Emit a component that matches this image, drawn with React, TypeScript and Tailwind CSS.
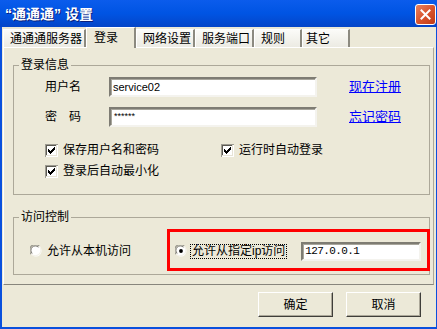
const tabs = [
  { label: "通通通服务器", cls: "w-[83px] pl-[6px]", active: false },
  { label: "登录", cls: "w-[50px] pl-[7px]", active: true },
  { label: "网络设置", cls: "w-[59px] pl-[6px]", active: false },
  { label: "服务端口", cls: "w-[59px] pl-[6px]", active: false },
  { label: "规则", cls: "w-[48px] pl-[6px]", active: false },
  { label: "其它", cls: "w-[48px] pl-[3px]", active: false },
];

function CheckBox() {
  // classic sunken 13x13 box with pixel check mark
  return (
    <svg width="13" height="13" viewBox="0 0 13 13" className="shrink-0" shapeRendering="crispEdges">
      <rect x="0" y="0" width="13" height="13" fill="#ffffff" />
      <rect x="0" y="0" width="13" height="1" fill="#9d9b91" />
      <rect x="0" y="0" width="1" height="13" fill="#9d9b91" />
      <rect x="1" y="1" width="11" height="1" fill="#5c5a52" />
      <rect x="1" y="1" width="1" height="11" fill="#5c5a52" />
      <rect x="1" y="11" width="11" height="1" fill="#e6e3d6" />
      <rect x="11" y="1" width="1" height="11" fill="#e6e3d6" />
      {[
        [3, 5], [4, 6], [5, 7], [6, 6], [7, 5], [8, 4], [9, 3],
      ].map(([x, y]) => (
        <rect key={x} x={x} y={y} width="1" height="3" fill="#000000" />
      ))}
    </svg>
  );
}

function Radio({ checked }: { checked?: boolean }) {
  return (
    <svg width="12" height="12" viewBox="0 0 12 12" className="shrink-0">
      <circle cx="6" cy="6" r="5.5" fill="#ffffff" />
      <path d="M1.2 9.2 A5.3 5.3 0 0 1 9.2 1.2" fill="none" stroke="#9a988e" strokeWidth="1.2" />
      <path d="M2.2 8.4 A4.3 4.3 0 0 1 8.4 2.2" fill="none" stroke="#6a6860" strokeWidth="0.9" />
      <path d="M9.2 1.2 A5.3 5.3 0 0 1 1.2 9.2" fill="none" stroke="#f4f2ea" strokeWidth="1.2" />
      {checked && <circle cx="6" cy="6" r="1.9" fill="#000000" />}
    </svg>
  );
}

function Field({ w, h, children }: { w: string; h: string; children?: React.ReactNode }) {
  return (
    <div
      className={`${w} ${h} flex items-center bg-white border-2 border-[#f4f3ee] border-t-[#7e7c73] border-l-[#7e7c73] shadow-[inset_1px_1px_0_#a8a69c] pl-[2px] overflow-hidden`}
    >
      {children}
    </div>
  );
}

function Link({ children }: { children: React.ReactNode }) {
  return (
    <a href="#" className="ml-[32px] text-[13px] leading-[16px] text-[#0000ff] underline">
      {children}
    </a>
  );
}

function Button({ children }: { children: React.ReactNode }) {
  return (
    <button className="w-[75px] h-[25px] flex items-center justify-center bg-[#ece9d8] border border-white border-b-[#3f3e3a] border-r-[#3f3e3a] shadow-[inset_-1px_-1px_0_#aca899] text-[12px] leading-[16px] text-black">
      {children}
    </button>
  );
}

export default function App() {
  return (
    <div className="w-[437px] h-[329px] flex flex-col bg-[#0a50dd] font-['Liberation_Sans','Noto_Sans_CJK_SC',sans-serif] text-black select-none">
      {/* title bar */}
      <div className="h-[27px] shrink-0 flex justify-between pl-[5px] pr-[1px] bg-linear-to-b from-[#0b5cec] via-[#0054e3] to-[#0445c8]">
        <div className="self-center text-[14px] leading-[18px] font-bold text-white [text-shadow:1px_1px_0_#0a1e7a]">
          “通通通” 设置
        </div>
        <div className="mt-[4px] w-[21px] h-[21px] rounded-[3px] border border-white bg-linear-to-br from-[#e8825f] via-[#d9542d] to-[#c03a15] flex items-center justify-center">
          <svg width="11" height="11" viewBox="0 0 11 11">
            <path d="M1.5 1.5 L9.5 9.5 M9.5 1.5 L1.5 9.5" stroke="#ffffff" strokeWidth="2" strokeLinecap="square" />
          </svg>
        </div>
      </div>

      {/* dialog body */}
      <div className="flex-1 ml-[2px] mr-[1px] mb-[2px] bg-[#ece9d8] flex flex-col">
        {/* tab strip */}
        <div className="h-[20px] shrink-0 flex items-end pl-[1px]">
          {tabs.map((t) =>
            t.active ? (
              <div
                key={t.label}
                className={`${t.cls} h-[21px] -mb-px relative z-10 flex items-center bg-[#ece9d8] border-t border-l border-white border-r-2 border-r-[#8c8a80] text-[12px] leading-[16px]`}
              >
                {t.label}
              </div>
            ) : (
              <div
                key={t.label}
                className={`${t.cls} h-[18px] flex items-center bg-linear-to-b from-[#fbfbf8] to-[#ecebe3] border-t border-l border-white border-r-2 border-r-[#8c8a80] text-[12px] leading-[16px]`}
              >
                {t.label}
              </div>
            )
          )}
        </div>

        {/* tab page */}
        <div className="relative h-[238px] shrink-0 ml-[1px] mr-[2px] border border-white border-b-[#87857c] border-r-[#aca899]">
          <fieldset className="ml-[9px] mt-[9px] w-[417px] h-[138px] border border-[#aca899]">
            <legend className="ml-[5px] px-[2px] text-[12px] leading-[16px]">登录信息</legend>
            <div className="pl-[31px] pt-[4px] text-[12px] leading-[16px]">
              <div className="flex items-center h-[20px]">
                <span className="w-[64px]">用户名</span>
                <Field w="w-[208px]" h="h-[20px]">
                  <span className="font-['Liberation_Sans',sans-serif] text-[11px]">service02</span>
                </Field>
                <Link>现在注册</Link>
              </div>
              <div className="mt-[10px] flex items-center h-[20px]">
                <span className="w-[64px]">密　码</span>
                <Field w="w-[208px]" h="h-[20px]">
                  <span className="font-['Liberation_Sans',sans-serif] text-[9px] leading-[9px] pl-px -mt-[2px]">******</span>
                </Field>
                <Link>忘记密码</Link>
              </div>
              <div className="mt-[15px] flex items-center h-[16px]">
                <label className="w-[176px] flex items-center gap-[5px]">
                  <CheckBox />
                  保存用户名和密码
                </label>
                <label className="flex items-center gap-[5px]">
                  <CheckBox />
                  运行时自动登录
                </label>
              </div>
              <div className="mt-[5px] flex items-center h-[16px]">
                <label className="flex items-center gap-[5px]">
                  <CheckBox />
                  登录后自动最小化
                </label>
              </div>
            </div>
          </fieldset>

          <fieldset className="ml-[9px] mt-[14px] w-[417px] h-[66px] border border-[#aca899]">
            <legend className="ml-[5px] px-[2px] text-[12px] leading-[16px]">访问控制</legend>
            <div className="pl-[16px] pt-[16px] text-[12px] leading-[16px]">
              <div className="flex items-center h-[20px]">
                <label className="w-[145px] flex items-center gap-[5px]">
                  <Radio />
                  允许从本机访问
                </label>
                <Radio checked />
                <span className="ml-[3px] h-[15px] px-px flex items-center border border-dotted border-black leading-[13px]">
                  允许从指定ip访问
                </span>
                <div className="ml-[14px]">
                  <Field w="w-[120px]" h="h-[19px]">
                    <span className="font-['Liberation_Mono',monospace] text-[11px] tracking-[-0.6px]">127.0.0.1</span>
                  </Field>
                </div>
              </div>
            </div>
          </fieldset>

          {/* red annotation frame */}
          <div className="absolute left-[163px] top-[181px] w-[263px] h-[42px] border-[3px] border-[#ff0000]" />
        </div>

        {/* buttons */}
        <div className="flex justify-end gap-[13px] pr-[15px] pt-[7px]">
          <Button>确定</Button>
          <Button>取消</Button>
        </div>
      </div>
    </div>
  );
}
